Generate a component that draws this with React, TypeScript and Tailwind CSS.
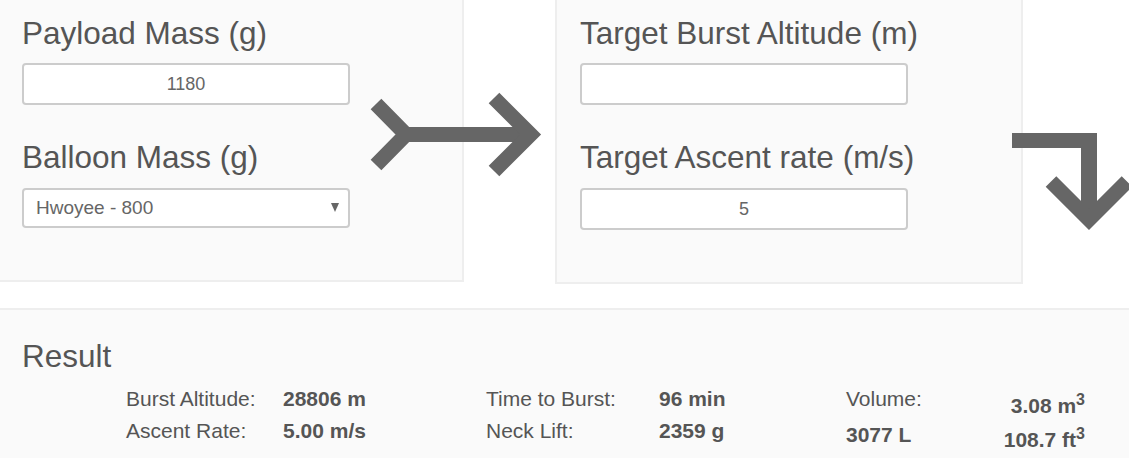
import React from 'react';

const RightArrow = () => (
  <svg className="absolute left-[370px] top-[85px]" width="180" height="100" viewBox="0 0 180 100">
    <g stroke="#666" strokeWidth="15" fill="none" strokeLinejoin="miter" strokeMiterlimit="4">
      <polyline points="6,19 36,49.5 6,80" />
      <line x1="34" y1="49.5" x2="160" y2="49.5" />
      <polyline points="124,13 160.5,49.5 124,86" />
    </g>
  </svg>
);

const DownArrow = () => (
  <svg className="absolute left-[1005px] top-[125px]" width="130" height="115" viewBox="0 0 130 115">
    <g fill="#666">
      <rect x="7" y="8" width="85" height="15" />
      <rect x="76" y="8" width="16" height="88" />
    </g>
    <polyline
      points="46,56.5 84,94.5 122,56.5"
      stroke="#666"
      strokeWidth="15"
      fill="none"
      strokeLinejoin="miter"
      strokeMiterlimit="4"
    />
  </svg>
);

const Field = ({ value }: { value: string }) => (
  <input
    readOnly
    value={value}
    className="block w-[328px] h-[42px] rounded-[4px] border-2 border-[#ccc] bg-white text-center text-[18px] text-[#666] outline-none"
  />
);

export default function App() {
  return (
    <div className="relative w-[1129px] h-[458px] overflow-hidden bg-white text-[#555] font-['Liberation_Sans',Arial,sans-serif]">
      <div className="flex h-[284px] items-start">
        {/* inputs: payload & balloon */}
        <div className="w-[464px] h-[282px] bg-[#fafafa] border-r-2 border-b-2 border-[#eee] pl-[22px]">
          <h2 className="pt-[16px] text-[31.5px] leading-[34px]">Payload Mass (g)</h2>
          <div className="mt-[13px]">
            <Field value="1180" />
          </div>
          <h2 className="mt-[35px] text-[31.5px] leading-[34px]">Balloon Mass (g)</h2>
          <div className="relative mt-[14px] w-[328px]">
            <select
              defaultValue="hwoyee-800"
              className="block w-[328px] h-[40px] appearance-none rounded-[4px] border-2 border-[#ccc] bg-white pl-[12px] text-[19px] text-[#666] outline-none"
            >
              <option value="hwoyee-800">Hwoyee - 800</option>
            </select>
            <svg className="absolute right-[11px] top-[15px]" width="8" height="9" viewBox="0 0 8 9">
              <polygon points="0,0 8,0 4,9" fill="#666" />
            </svg>
          </div>
        </div>

        {/* targets */}
        <div className="ml-[91px] w-[468px] h-[284px] bg-[#fafafa] border-x-2 border-b-2 border-[#eee] pl-[23px]">
          <h2 className="pt-[16px] text-[31.5px] leading-[34px]">Target Burst Altitude (m)</h2>
          <div className="mt-[13px]">
            <Field value="" />
          </div>
          <h2 className="mt-[35px] text-[31.5px] leading-[34px]">Target Ascent rate (m/s)</h2>
          <div className="mt-[14px]">
            <Field value="5" />
          </div>
        </div>
      </div>

      <RightArrow />
      <DownArrow />

      {/* result */}
      <div className="mt-[24px] h-[160px] border-t-2 border-[#eee] bg-[#fafafa] pl-[22px]">
        <h2 className="pt-[29px] text-[31.5px] leading-[34px]">Result</h2>
        <div className="mt-[10px] ml-[104px] flex items-start text-[21px] leading-[32px]">
          <div className="w-[360px] grid grid-cols-[157px_1fr]">
            <span>Burst Altitude:</span>
            <span className="font-bold">28806 m</span>
            <span>Ascent Rate:</span>
            <span className="font-bold">5.00 m/s</span>
          </div>
          <div className="w-[360px] grid grid-cols-[173px_1fr]">
            <span>Time to Burst:</span>
            <span className="font-bold">96 min</span>
            <span>Neck Lift:</span>
            <span className="font-bold">2359 g</span>
          </div>
          <div className="w-[239px] flex justify-between">
            <div className="flex flex-col">
              <span>Volume:</span>
              <span className="mt-[4px] font-bold">3077 L</span>
            </div>
            <div className="flex flex-col items-end pt-[6px] leading-[34px] font-bold">
              <span>
                3.08 m<sup className="text-[16px]">3</sup>
              </span>
              <span>
                108.7 ft<sup className="text-[16px]">3</sup>
              </span>
            </div>
          </div>
        </div>
      </div>
    </div>
  );
}
